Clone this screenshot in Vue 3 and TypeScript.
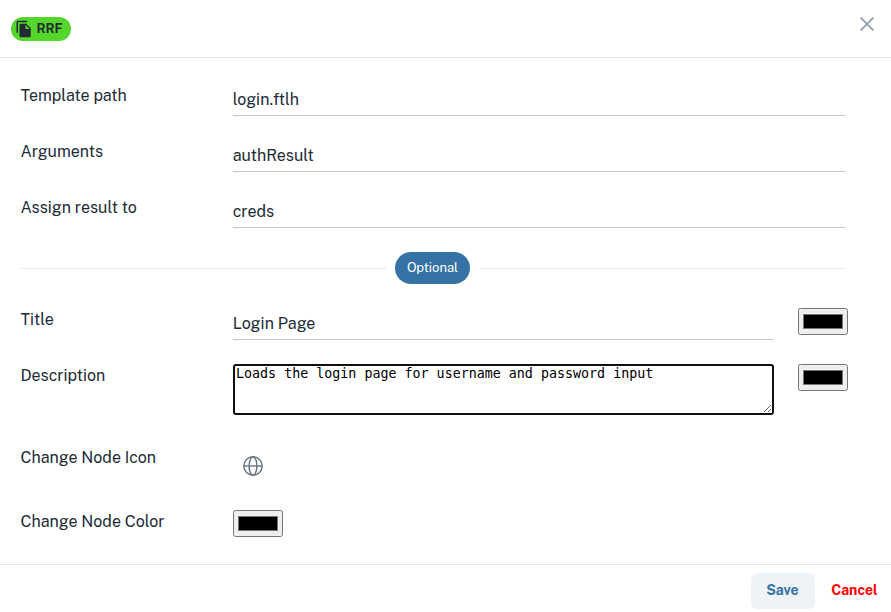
<script setup lang="ts">
import { ref } from 'vue'

interface TextField {
  id: string
  label: string
  value: string
}

const fields = ref<TextField[]>([
  { id: 'path', label: 'Template path', value: 'login.ftlh' },
  { id: 'args', label: 'Arguments', value: 'authResult' },
  { id: 'assign', label: 'Assign result to', value: 'creds' },
])
const title = ref('Login Page')
const description = ref('Loads the login page for username and password input')
const titleColor = ref('#000000')
const descriptionColor = ref('#000000')
const nodeColor = ref('#000000')
</script>

<template>
  <div class="dialog">
    <header class="header">
      <span class="badge">
        <svg class="badge-icon" viewBox="0 0 24 24" fill="currentColor">
          <path d="M16 1H4c-1.100 0-2 .9-2 2v14h2V3h12V1zm-1 4l6 6v10c0 1.100-.9 2-2 2H7.990C6.890 23 6 22.100 6 21l.01-14c0-1.100.89-2 1.990-2h7zm-1 7h5.500L14 6.500V12z" />
        </svg>
        <span>RRF</span>
      </span>
      <button class="close" type="button">
        <svg width="14" height="14" viewBox="0 0 14 14" fill="none" stroke="currentColor" stroke-width="1.800">
          <path d="M.6.6l12.800 12.800M13.400.6L.6 13.400" />
        </svg>
      </button>
    </header>

    <main class="body">
      <div v-for="field in fields" :key="field.id" class="row">
        <label class="label" :for="field.id">{{ field.label }}</label>
        <input :id="field.id" v-model="field.value" class="text" type="text" spellcheck="false" />
      </div>

      <div class="divider"><span class="pill">Optional</span></div>

      <div class="row with-color">
        <label class="label" for="title">Title</label>
        <input id="title" v-model="title" class="text" type="text" />
        <input v-model="titleColor" class="swatch" type="color" />
      </div>
      <div class="row with-color description">
        <label class="label" for="description">Description</label>
        <textarea id="description" v-model="description" class="area" spellcheck="false"></textarea>
        <input v-model="descriptionColor" class="swatch" type="color" />
      </div>
      <div class="row icon-row">
        <span class="label">Change Node Icon</span>
        <button class="icon-button" type="button">
          <svg width="20" height="20" viewBox="0 0 20 20" fill="none" stroke="currentColor" stroke-width="1.400">
            <circle cx="10" cy="10" r="9.200" />
            <ellipse cx="10" cy="10" rx="3.900" ry="9.200" />
            <path d="M.8 10h18.400" />
          </svg>
        </button>
      </div>
      <div class="row">
        <label class="label" for="color">Change Node Color</label>
        <input id="color" v-model="nodeColor" class="swatch" type="color" />
      </div>
    </main>

    <footer class="footer">
      <button class="action save" type="button">Save</button>
      <button class="action cancel" type="button">Cancel</button>
    </footer>
  </div>
</template>

<style>
body {
  background: #fff;
  overflow: hidden;
}
</style>

<style scoped>
.dialog,
.dialog * {
  box-sizing: border-box;
}
.dialog {
  display: flex;
  flex-direction: column;
  height: 612px;
  color: #212b36;
  font: 400 16px/24px 'Public Sans', Inter, sans-serif;
}
button {
  border: 0;
  padding: 0;
  background: none;
  font-family: inherit;
}
svg {
  display: block;
}
.header {
  display: flex;
  flex: none;
  justify-content: space-between;
  align-items: flex-start;
  height: 58px;
  padding: 17px 17px 0 11px;
  border-bottom: 1px solid #e3e5e7;
}
.badge {
  display: flex;
  align-items: center;
  gap: 4px;
  width: 60px;
  height: 24px;
  padding-left: 3.500px;
  border-radius: 12px;
  background: #54d62c;
  font-size: 13px;
  font-weight: 700;
}
.badge-icon {
  width: 18px;
  height: 18px;
}
.close {
  color: #919eab;
}
.body {
  flex: 1;
  min-height: 0;
  padding: 26px 46px 0 21px;
}
.row {
  display: grid;
  grid-template-columns: 212px 1fr;
  align-items: start;
  height: 56px;
}
.with-color {
  grid-template-columns: 212px 541px 50px;
}
.with-color .swatch {
  margin-left: 24px;
}
.label {
  margin-left: -0.5px;
  white-space: nowrap;
}
.text {
  width: 100%;
  height: 32px;
  padding: 4px 0;
  border: 0;
  border-bottom: 1px solid #c2c8cd;
  border-radius: 0;
  outline: 0;
  background: transparent;
  color: inherit;
  font: inherit;
  line-height: 23px;
  text-indent: -0.3px;
}
.divider {
  display: flex;
  align-items: center;
  gap: 10px;
  height: 32px;
  margin-bottom: 24px;
}
.divider::before,
.divider::after {
  content: '';
  flex: 1;
  height: 1px;
  margin-top: 1px;
  background: #e5e8eb;
}
.divider::before {
  flex: none;
  width: 365px;
  margin-right: -1px;
}
.pill {
  width: 75px;
  height: 32px;
  border-radius: 16px;
  background: #3572a5;
  color: #fff;
  font-size: 13px;
  line-height: 32px;
  text-align: center;
}
.swatch {
  width: 50px;
  height: 27px;
}
.description {
  height: 82px;
}
.area {
  display: block;
  width: 100%;
  height: 51px;
  padding: 0 1px;
  border: 2px solid #101010;
  border-radius: 3px;
  outline: 0;
  background: #fff;
  color: #000;
  font: 13.333px/15px 'DejaVu Sans Mono', monospace;
}
.icon-row {
  height: 64px;
}
.icon-button {
  width: 40px;
  height: 40px;
  padding: 10px;
  color: #637381;
}
.footer {
  display: flex;
  flex: none;
  align-items: flex-start;
  justify-content: flex-end;
  height: 48px;
  padding-top: 8px;
  border-top: 1px solid #e3e5e7;
}
.action {
  height: 36px;
  padding-bottom: 2px;
  border-radius: 6px;
  font-size: 14px;
  font-weight: 700;
  line-height: 34px;
}
.save {
  width: 64px;
  padding-right: 1px;
  background: #eef3f8;
  color: #3572a5;
}
.cancel {
  width: 76px;
  padding-left: 3px;
  color: #f00;
}
</style>
